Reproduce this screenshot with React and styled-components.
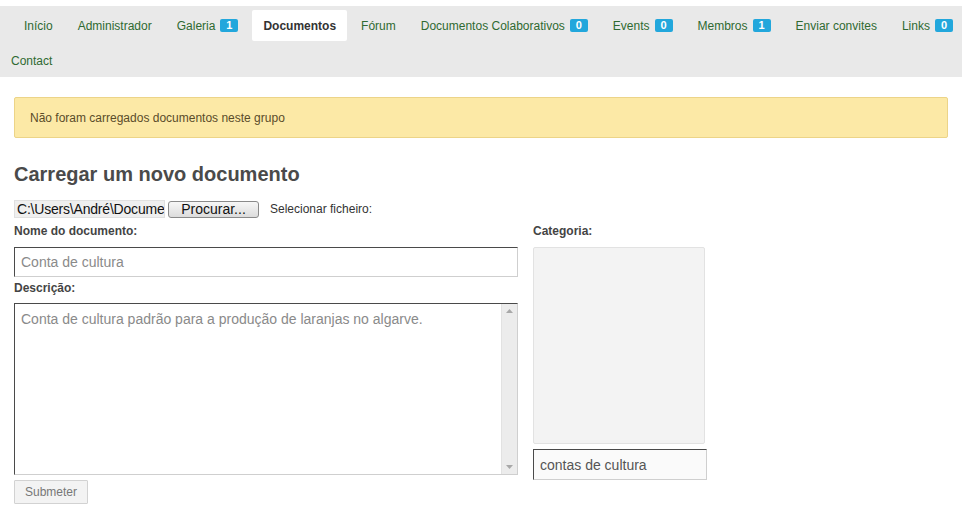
import React from "react";
import styled, { createGlobalStyle } from "styled-components";

const GlobalStyle = createGlobalStyle`
  body {
    margin: 0;
    background: #fff;
    font-family: "Liberation Sans", Arial, sans-serif;
    font-size: 12px;
    color: #333;
  }
`;

const Page = styled.div`
  padding-top: 6px;
`;

const NavBar = styled.nav`
  background: #e9e9e9;
  overflow: hidden;
`;

const Nav = styled.ul`
  list-style: none;
  margin: 0 -12px 0 0;
  padding: 4px 0 1px;
  display: flex;
  flex-wrap: wrap;
  row-gap: 4px;
`;

const NavItem = styled.li`
  margin-right: 3px;
  margin-left: ${(p) => (p.$lead ? "13px" : "0")};
`;

const NavLink = styled.a`
  display: flex;
  align-items: center;
  gap: 5px;
  height: 31px;
  padding: 0 11px;
  border-radius: 2px;
  font-size: 12px;
  text-decoration: none;
  color: ${(p) => (p.$active ? "#333" : "#2f6a31")};
  font-weight: ${(p) => (p.$active ? "bold" : "normal")};
  background: ${(p) => (p.$active ? "#fff" : "transparent")};
`;

const Badge = styled.span`
  display: inline-block;
  min-width: 18px;
  height: 13px;
  line-height: 13px;
  padding: 0 4px;
  box-sizing: border-box;
  border-radius: 2px;
  background: #22a7dc;
  color: #fff;
  font-size: 11px;
  font-weight: bold;
  text-align: center;
`;

const Content = styled.div`
  padding: 20px 14px 0;
`;

const Alert = styled.div`
  background: #fce9a6;
  border: 1px solid #ecd488;
  border-radius: 2px;
  padding: 0 15px;
  height: 39px;
  display: flex;
  align-items: center;
  color: #5a4c2a;
  font-size: 12px;
`;

const Heading = styled.h2`
  margin: 24px 0 14px;
  font-size: 20px;
  line-height: 24px;
  font-weight: bold;
  color: #4a4a4a;
`;

const FileRow = styled.div`
  display: flex;
  align-items: center;
  height: 18px;
  margin-bottom: 6px;
`;

const FilePath = styled.div`
  width: 151px;
  height: 18px;
  box-sizing: border-box;
  padding: 0 2px;
  background: #efefef;
  border: 1px solid #e0e0e0;
  font-size: 14px;
  line-height: 16px;
  letter-spacing: -0.2px;
  color: #111;
  white-space: nowrap;
  overflow: hidden;
`;

const BrowseButton = styled.button`
  margin-left: 3px;
  width: 91px;
  height: 17px;
  padding: 0;
  border: 1px solid #8a8a8a;
  border-radius: 3px;
  background: linear-gradient(#f7f7f7, #dcdcdc);
  font-family: "Liberation Sans", Arial, sans-serif;
  font-size: 14px;
  line-height: 15px;
  color: #111;
`;

const FileHint = styled.span`
  margin-left: 11px;
  font-size: 12px;
  color: #333;
`;

const FormGrid = styled.div`
  display: grid;
  grid-template-columns: 504px 174px;
  column-gap: 15px;
  align-items: start;
`;

const Column = styled.div`
  display: flex;
  flex-direction: column;
`;

const Label = styled.label`
  display: block;
  font-size: 12px;
  line-height: 15px;
  font-weight: bold;
  color: #444;
  margin-bottom: ${(p) => p.$gap || "8px"};
`;

const TextInput = styled.input`
  box-sizing: border-box;
  width: ${(p) => p.$width || "100%"};
  height: ${(p) => p.$height || "30px"};
  margin: 0 0 ${(p) => p.$after || "4px"};
  padding: 0 6px;
  border: 1px solid;
  border-color: #4a4a4a #cfcfcf #cfcfcf #4a4a4a;
  background: ${(p) => p.$bg || "#fff"};
  font-family: "Liberation Sans", Arial, sans-serif;
  font-size: 14px;
  color: #555;
  outline: none;
  &::placeholder {
    color: #8a8a8a;
  }
`;

const AreaBox = styled.div`
  display: flex;
  height: 172px;
  box-sizing: border-box;
  border: 1px solid;
  border-color: #4a4a4a #cfcfcf #cfcfcf #4a4a4a;
  margin-bottom: 5px;
`;

const Area = styled.textarea`
  flex: 1;
  border: none;
  resize: none;
  padding: 6px 6px;
  font-family: "Liberation Sans", Arial, sans-serif;
  font-size: 14px;
  line-height: 18px;
  color: #555;
  outline: none;
  &::placeholder {
    color: #8a8a8a;
  }
`;

const Scrollbar = styled.div`
  width: 15px;
  background: #ececec;
  border-left: 1px solid #e2e2e2;
  display: flex;
  flex-direction: column;
  justify-content: space-between;
  align-items: center;
  padding: 5px 0;
`;

const SubmitButton = styled.button`
  align-self: flex-start;
  width: 74px;
  height: 24px;
  padding: 0;
  border: 1px solid #d2d2d2;
  border-radius: 1px;
  background: #f3f3f3;
  font-family: "Liberation Sans", Arial, sans-serif;
  font-size: 12px;
  color: #777;
`;

const CategoryBox = styled.div`
  width: 172px;
  height: 197px;
  box-sizing: border-box;
  background: #f3f3f3;
  border: 1px solid #e2e2e2;
  border-radius: 2px;
  margin-bottom: 5px;
`;

const Arrow = ({ up }) => (
  <svg width="7" height="4" viewBox="0 0 7 4">
    <path d={up ? "M0 4 L3.5 0 L7 4 Z" : "M0 0 L3.5 4 L7 0 Z"} fill="#a8a8a8" />
  </svg>
);

const navItems = [
  { label: "Início", lead: true },
  { label: "Administrador" },
  { label: "Galeria", badge: 1 },
  { label: "Documentos", active: true },
  { label: "Fórum" },
  { label: "Documentos Colaborativos", badge: 0 },
  { label: "Events", badge: 0 },
  { label: "Membros", badge: 1 },
  { label: "Enviar convites" },
  { label: "Links", badge: 0 },
  { label: "Contact" },
];

const App = () => {
  return (
    <Page>
      <GlobalStyle />
      <NavBar>
        <Nav>
          {navItems.map((item) => (
            <NavItem key={item.label} $lead={item.lead}>
              <NavLink href="#" $active={item.active}>
                {item.label}
                {item.badge !== undefined && <Badge>{item.badge}</Badge>}
              </NavLink>
            </NavItem>
          ))}
        </Nav>
      </NavBar>
      <Content>
        <Alert>Não foram carregados documentos neste grupo</Alert>
        <Heading>Carregar um novo documento</Heading>
        <FileRow>
          <FilePath>C:\Users\André\Documer</FilePath>
          <BrowseButton type="button">Procurar...</BrowseButton>
          <FileHint>Selecionar ficheiro:</FileHint>
        </FileRow>
        <FormGrid>
          <Column>
            <Label>Nome do documento:</Label>
            <TextInput placeholder="Conta de cultura" />
            <Label $gap="7px">Descrição:</Label>
            <AreaBox>
              <Area placeholder="Conta de cultura padrão para a produção de laranjas no algarve." />
              <Scrollbar>
                <Arrow up />
                <Arrow />
              </Scrollbar>
            </AreaBox>
            <SubmitButton type="submit">Submeter</SubmitButton>
          </Column>
          <Column>
            <Label>Categoria:</Label>
            <CategoryBox />
            <TextInput $width="174px" $height="31px" $bg="#fafafa" defaultValue="contas de cultura" />
          </Column>
        </FormGrid>
      </Content>
    </Page>
  );
};

export default App;
